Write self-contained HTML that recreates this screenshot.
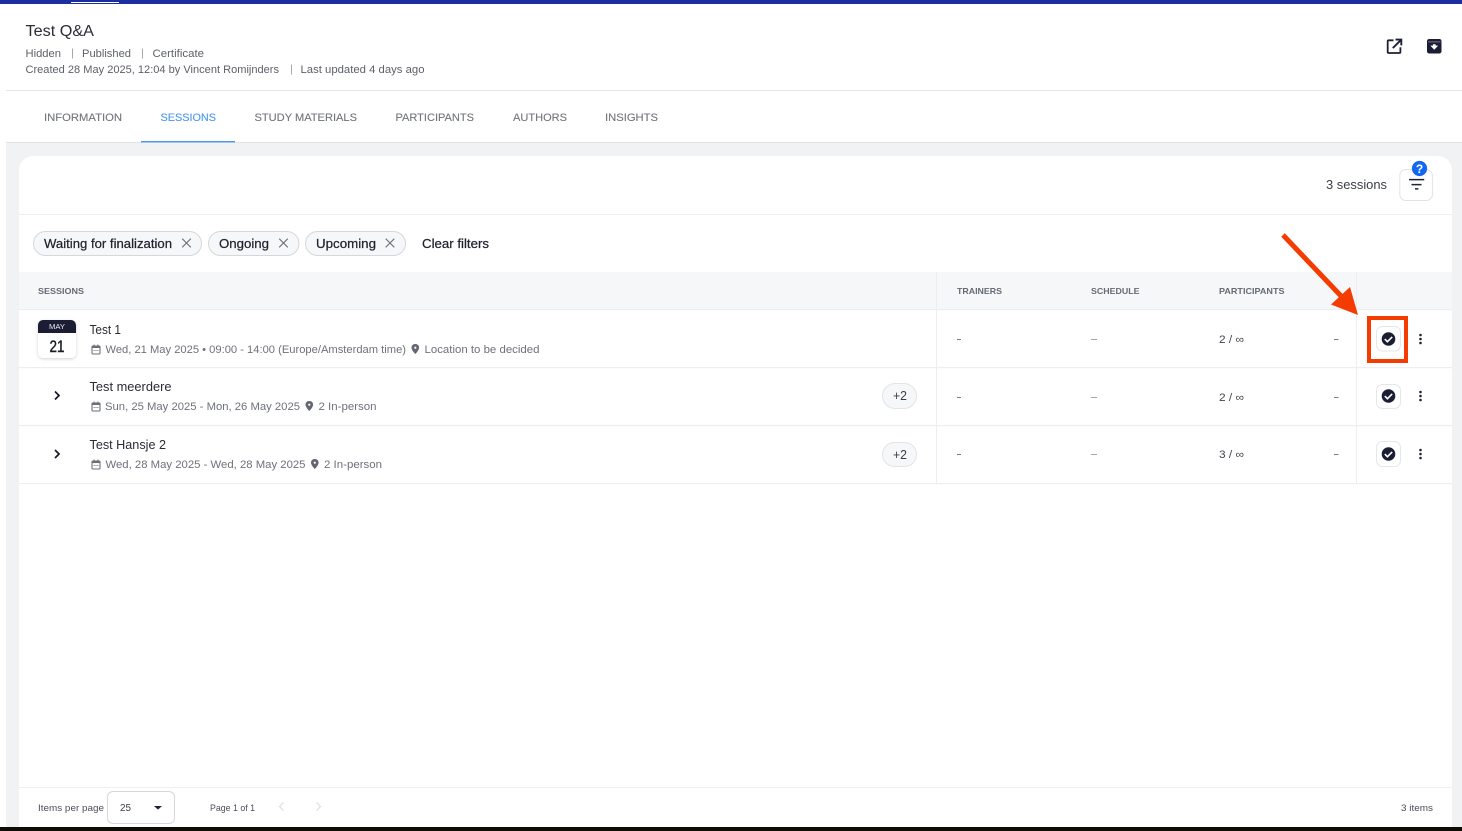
<!DOCTYPE html>
<html lang="en"><head><meta charset="utf-8"><title>Test Q&amp;A</title>
<style>
html,body{margin:0;padding:0;background:#fff;width:1462px;height:831px;overflow:hidden}
svg{display:block}
text{font-family:"Liberation Sans",sans-serif;white-space:pre}
.m{stroke:currentColor;stroke-width:.25px}
.t{stroke:currentColor;stroke-width:.12px}
</style></head><body>
<svg width="1462" height="831" viewBox="0 0 1462 831" xmlns="http://www.w3.org/2000/svg">
<defs>
<g id="cal"><rect x="1" y="1.5" width="8" height="8" rx="1" fill="none" stroke="#6b6f78" stroke-width="1.1"/><rect x="1" y="1.5" width="8" height="2" fill="#6b6f78"/><rect x="2.6" y="0" width="1" height="2" fill="#6b6f78"/><rect x="6.4" y="0" width="1" height="2" fill="#6b6f78"/><path d="M2.6 6h1M4.5 6h1M6.4 6h1" stroke="#6b6f78" stroke-width="1"/></g>
<g id="pin"><path d="M4 0C1.6 0 .2 1.7.2 3.7.2 6.2 4 10 4 10S7.8 6.2 7.8 3.7C7.8 1.7 6.4 0 4 0Z" fill="#636772"/><circle cx="4" cy="3.7" r="1.1" fill="#fff"/></g>
<g id="chk"><circle r="6.8" fill="#1a1d33"/><path d="M-3.7 .1-1.1 2.7 3.7-2.1" fill="none" stroke="#fff" stroke-width="1.6"/></g>
<g id="dots"><circle cx="0" cy="-4" r="1.3" fill="#1f2233"/><circle cx="0" cy="0" r="1.3" fill="#1f2233"/><circle cx="0" cy="4" r="1.3" fill="#1f2233"/></g>
<g id="xx"><path d="M-4.3-4.3 4.3 4.3M4.3-4.3-4.3 4.3" stroke="#71747c" stroke-width="1.1" fill="none"/></g>
<filter id="sh" x="-30%" y="-30%" width="160%" height="170%"><feDropShadow dx="0" dy="1" stdDeviation="1.5" flood-color="#000" flood-opacity=".18"/></filter>
</defs>

<rect width="1462" height="831" fill="#fff"/>
<!-- top bar -->
<rect width="1462" height="4" fill="#1c2f9f"/>
<rect x="71" y="2" width="48" height="1" fill="#fff"/>

<!-- header -->
<text x="25.5" y="36" font-size="15.5" fill="#2a2c36" textLength="68.5" lengthAdjust="spacingAndGlyphs">Test Q&amp;A</text>
<g font-size="11" fill="#5d6069">
<text x="25.5" y="57" textLength="35.5" lengthAdjust="spacingAndGlyphs">Hidden</text>
<text x="82" y="57" textLength="49" lengthAdjust="spacingAndGlyphs">Published</text>
<text x="152.5" y="57" textLength="51.5" lengthAdjust="spacingAndGlyphs">Certificate</text>
<text x="25.5" y="73" textLength="253.5" lengthAdjust="spacingAndGlyphs">Created 28 May 2025, 12:04 by Vincent Romijnders</text>
<text x="300.5" y="73" textLength="124" lengthAdjust="spacingAndGlyphs">Last updated 4 days ago</text>
</g>
<path d="M72.5 48.5v10M142.5 48.5v10M291.5 64.5v10" stroke="#a6a8ad" stroke-width="1"/>

<!-- header icons -->
<path d="M1393.5 40.3h-4.8a1 1 0 0 0-1 1v10.7a1 1 0 0 0 1 1h10.7a1 1 0 0 0 1-1v-4.8" fill="none" stroke="#1e2136" stroke-width="1.8"/>
<path d="M1395.5 39.6h5.8v5.8M1400.8 40.1l-8 8" fill="none" stroke="#1e2136" stroke-width="1.9"/>
<rect x="1427" y="39" width="14.5" height="14.5" rx="2.2" fill="#1a1d33"/>
<rect x="1428" y="41.5" width="12.5" height=".8" fill="#fff" opacity=".5"/>
<path d="M1430.3 45.6h2.6v-1.4h2.7v1.4h2.6l-3.95 4.2Z" fill="#fff"/>

<rect x="6" y="90" width="1456" height="1" fill="#e4e5e7"/>

<!-- tabs -->
<g font-size="11" fill="#72757d" style="color:#72757d">
<text class="t" x="44" y="121" textLength="78" lengthAdjust="spacingAndGlyphs">INFORMATION</text>
<text class="t" x="160.5" y="121" textLength="55.5" lengthAdjust="spacingAndGlyphs" fill="#4a98ef" style="color:#4a98ef">SESSIONS</text>
<text class="t" x="254.5" y="121" textLength="102.5" lengthAdjust="spacingAndGlyphs">STUDY MATERIALS</text>
<text class="t" x="395.5" y="121" textLength="78.5" lengthAdjust="spacingAndGlyphs">PARTICIPANTS</text>
<text class="t" x="513" y="121" textLength="54" lengthAdjust="spacingAndGlyphs">AUTHORS</text>
<text class="t" x="605" y="121" textLength="53" lengthAdjust="spacingAndGlyphs">INSIGHTS</text>
</g>

<!-- page bg -->
<rect x="6" y="142" width="1456" height="689" fill="#f1f2f4"/>
<rect x="6" y="142" width="1456" height="1" fill="#e2e3e6"/>
<rect x="141" y="141" width="94" height="1.4" fill="#4a98ef"/>

<!-- card -->
<path d="M19 170a14 14 0 0 1 14-14H1438a14 14 0 0 1 14 14V827H19Z" fill="#fff"/>
<rect x="0" y="827" width="1462" height="4" fill="#0f0c06"/>

<!-- toolbar -->
<text x="1326" y="189" font-size="13" fill="#3b3e48" textLength="61" lengthAdjust="spacingAndGlyphs">3 sessions</text>
<rect x="1399.8" y="169.5" width="32.6" height="31" rx="6" fill="#fff" stroke="#e1e3e9"/>
<path d="M1409 179.6h15.2M1411.5 184.6h10M1415 188.9h3.4" stroke="#1f2233" stroke-width="1.5" fill="none"/>
<circle cx="1419.5" cy="168.5" r="7.6" fill="#1468f0"/>
<text x="1419.5" y="172.8" font-size="12" font-weight="700" fill="#fff" text-anchor="middle">?</text>
<rect x="19" y="214" width="1433" height="1" fill="#eeeff2"/>

<!-- chips -->
<g fill="#f6f7f9" stroke="#d5d7dc">
<rect x="33.5" y="231.5" width="168" height="24" rx="12"/>
<rect x="208.5" y="231.5" width="90.5" height="24" rx="12"/>
<rect x="305.5" y="231.5" width="100" height="24" rx="12"/>
</g>
<g font-size="13" fill="#1f2230" style="color:#1f2230">
<text class="m" x="44" y="248" textLength="128" lengthAdjust="spacingAndGlyphs">Waiting for finalization</text>
<text class="m" x="219" y="248" textLength="50" lengthAdjust="spacingAndGlyphs">Ongoing</text>
<text class="m" x="316" y="248" textLength="60" lengthAdjust="spacingAndGlyphs">Upcoming</text>
<text class="m" x="422" y="248" textLength="67" lengthAdjust="spacingAndGlyphs">Clear filters</text>
</g>
<use href="#xx" x="186.5" y="243"/><use href="#xx" x="283.5" y="243"/><use href="#xx" x="390" y="243"/>

<!-- table header -->
<rect x="19" y="272" width="1433" height="37" fill="#f6f7f9"/>
<g fill="#eceef1">
<rect x="19" y="309" width="1433" height="1.2"/>
<rect x="19" y="367" width="1433" height="1.2"/>
<rect x="19" y="425" width="1433" height="1.2"/>
<rect x="19" y="483" width="1433" height="1.2"/>
<rect x="936" y="272" width="1" height="212"/>
<rect x="1356" y="272" width="1" height="212"/>
</g>
<g font-size="8.5" font-weight="700" fill="#666a75">
<text x="38" y="294" textLength="46" lengthAdjust="spacingAndGlyphs">SESSIONS</text>
<text x="957" y="294" textLength="45" lengthAdjust="spacingAndGlyphs">TRAINERS</text>
<text x="1091" y="294" textLength="48.5" lengthAdjust="spacingAndGlyphs">SCHEDULE</text>
<text x="1219" y="294" textLength="65.5" lengthAdjust="spacingAndGlyphs">PARTICIPANTS</text>
</g>

<!-- calendar -->
<rect x="38" y="320" width="38" height="38" rx="5" fill="#fff" filter="url(#sh)"/>
<path d="M38 333v-8a5 5 0 0 1 5-5h28a5 5 0 0 1 5 5v8Z" fill="#1a1d33"/>
<text x="49" y="329" font-size="7.5" fill="#e8e9ee" textLength="16" lengthAdjust="spacingAndGlyphs">MAY</text>
<text class="m" x="49.5" y="352" font-size="16.5" fill="#1a1d2a" style="color:#1a1d2a;stroke-width:.4px" textLength="15" lengthAdjust="spacingAndGlyphs">21</text>

<!-- rows -->
<g font-size="12.5" fill="#2a2c36">
<text x="89.5" y="334" textLength="31.5" lengthAdjust="spacingAndGlyphs">Test 1</text>
<text x="89.5" y="391" textLength="82" lengthAdjust="spacingAndGlyphs">Test meerdere</text>
<text x="89.5" y="449" textLength="76.5" lengthAdjust="spacingAndGlyphs">Test Hansje 2</text>
</g>
<g font-size="11" fill="#6e717a">
<text x="105.5" y="353" textLength="300.5" lengthAdjust="spacingAndGlyphs">Wed, 21 May 2025 • 09:00 - 14:00 (Europe/Amsterdam time)</text>
<text x="424.5" y="353" textLength="115" lengthAdjust="spacingAndGlyphs">Location to be decided</text>
<text x="105" y="410" textLength="195" lengthAdjust="spacingAndGlyphs">Sun, 25 May 2025 - Mon, 26 May 2025</text>
<text x="318.5" y="410" textLength="58" lengthAdjust="spacingAndGlyphs">2 In-person</text>
<text x="105.5" y="468" textLength="200" lengthAdjust="spacingAndGlyphs">Wed, 28 May 2025 - Wed, 28 May 2025</text>
<text x="324" y="468" textLength="58" lengthAdjust="spacingAndGlyphs">2 In-person</text>
</g>
<use href="#cal" x="91" y="344.5"/><use href="#cal" x="91" y="401.5"/><use href="#cal" x="91" y="459.5"/>
<use href="#pin" x="411.3" y="344"/><use href="#pin" x="305.3" y="401"/><use href="#pin" x="310.8" y="459"/>
<path d="M55 391.5l4 4-4 4M55 450l4 4-4 4" fill="none" stroke="#15172a" stroke-width="1.7"/>

<!-- +2 pills -->
<rect x="882.5" y="383.5" width="34" height="25" rx="12.5" fill="#f6f7f9" stroke="#e2e4e8"/>
<rect x="882.5" y="442.5" width="34" height="24" rx="12" fill="#f6f7f9" stroke="#e2e4e8"/>
<g font-size="12.5" fill="#3a3d48">
<text x="893" y="400" textLength="14" lengthAdjust="spacingAndGlyphs">+2</text>
<text x="893" y="459" textLength="14" lengthAdjust="spacingAndGlyphs">+2</text>
</g>

<!-- dashes -->
<path d="M957 339.5h4M957 397.5h4M957 454.5h4M1334 339.5h4.5M1334 397.5h4.5M1334 454.5h4.5" stroke="#7a7d85" stroke-width="1"/>
<path d="M1091 339.5h6M1091 397.5h6M1091 454.5h6" stroke="#a3a5ab" stroke-width="1"/>
<g font-size="11" fill="#43464f">
<text x="1219" y="343" textLength="25" lengthAdjust="spacingAndGlyphs">2 / ∞</text>
<text x="1219" y="401" textLength="25" lengthAdjust="spacingAndGlyphs">2 / ∞</text>
<text x="1219" y="458" textLength="25" lengthAdjust="spacingAndGlyphs">3 / ∞</text>
</g>

<!-- action buttons -->
<g fill="#fff" stroke="#e5e6ee">
<rect x="1376.5" y="326.5" width="24" height="24.5" rx="6"/>
<rect x="1376.5" y="384.5" width="24" height="24" rx="6"/>
<rect x="1376.5" y="441.5" width="24" height="25" rx="6"/>
</g>
<use href="#chk" x="1388.5" y="339"/><use href="#chk" x="1388.5" y="396"/><use href="#chk" x="1388.5" y="454"/>
<use href="#dots" x="1420.5" y="339"/><use href="#dots" x="1420.5" y="396"/><use href="#dots" x="1420.5" y="454"/>

<!-- annotation -->
<rect x="1369" y="318" width="37" height="43" fill="none" stroke="#f53c00" stroke-width="4"/>
<path d="M1283 235 1342 297" stroke="#f53c00" stroke-width="5" fill="none"/>
<path d="M1358 315 1331 304.5 1350 287Z" fill="#f53c00"/>

<!-- footer -->
<rect x="19" y="787" width="1433" height="1" fill="#eeeff2"/>
<g font-size="9.5" fill="#4b4e58">
<text x="38" y="811" textLength="66" lengthAdjust="spacingAndGlyphs">Items per page</text>
<text x="210" y="811" textLength="45" lengthAdjust="spacingAndGlyphs">Page 1 of 1</text>
<text x="1401" y="811" textLength="32" lengthAdjust="spacingAndGlyphs">3 items</text>
</g>
<rect x="107.5" y="791.5" width="67" height="32" rx="5.5" fill="#fff" stroke="#d5d7dc"/>
<text x="120" y="811" font-size="10" fill="#3a3d48" textLength="11" lengthAdjust="spacingAndGlyphs">25</text>
<path d="M154 806h8l-4 3.6Z" fill="#1f2233"/>
<path d="M283.5 802.5 279.5 806.5 283.5 810.5M316.5 802.5 320.5 806.5 316.5 810.5" fill="none" stroke="#dcdde1" stroke-width="1.2"/>
</svg>
</body></html>
